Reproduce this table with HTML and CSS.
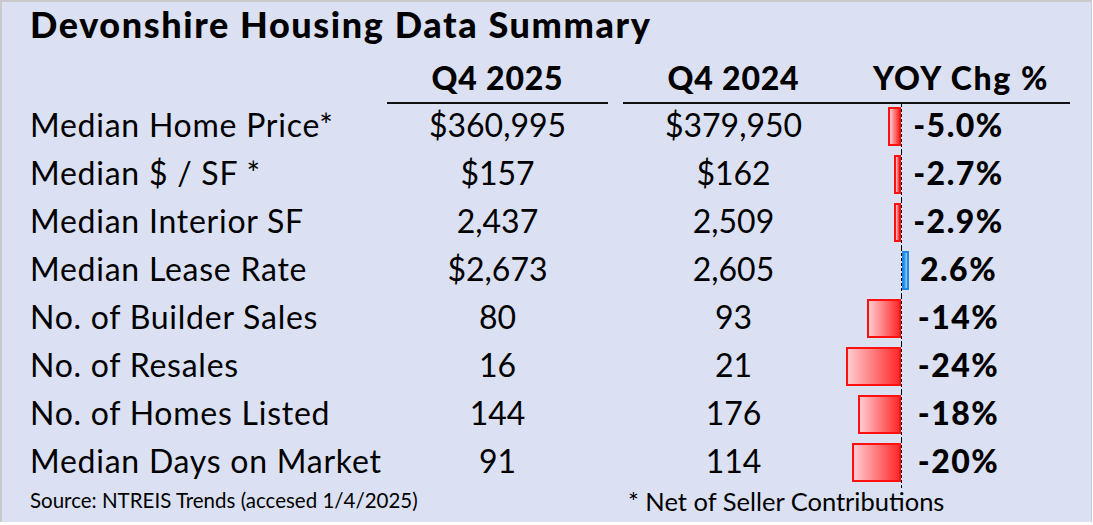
FILE: index.html
```html
<!DOCTYPE html>
<html>
<head>
<meta charset="utf-8">
<link rel="stylesheet" href="styles.css">
</head>
<body>
<div class="panel">
  <h1 class="title">Devonshire Housing Data Summary</h1>
  <div class="table">
    <div class="row head">
      <div class="label"></div>
      <div class="c25 hcell">Q4 2025</div>
      <div class="c24 hcell">Q4 2024</div>
      <div class="yoy-head hcell">YOY Chg %</div>
    </div>
    <div class="row">
      <div class="label">Median Home Price*</div>
      <div class="c25">$360,995</div>
      <div class="c24">$379,950</div>
      <div class="yoy"><div class="bars"><span class="bar neg" style="width:13px"></span></div><div class="pct"><span class="num">-5.0%</span></div></div>
    </div>
    <div class="row">
      <div class="label">Median $ / SF *</div>
      <div class="c25">$157</div>
      <div class="c24">$162</div>
      <div class="yoy"><div class="bars"><span class="bar neg" style="width:7px"></span></div><div class="pct"><span class="num">-2.7%</span></div></div>
    </div>
    <div class="row">
      <div class="label">Median Interior SF</div>
      <div class="c25">2,437</div>
      <div class="c24">2,509</div>
      <div class="yoy"><div class="bars"><span class="bar neg" style="width:7px"></span></div><div class="pct"><span class="num">-2.9%</span></div></div>
    </div>
    <div class="row">
      <div class="label">Median Lease Rate</div>
      <div class="c25">$2,673</div>
      <div class="c24">2,605</div>
      <div class="yoy"><div class="bars"></div><div class="pct"><span class="bar pos" style="width:7px"></span><span class="num">2.6%</span></div></div>
    </div>
    <div class="row">
      <div class="label">No. of Builder Sales</div>
      <div class="c25">80</div>
      <div class="c24">93</div>
      <div class="yoy"><div class="bars"><span class="bar neg" style="width:34px"></span></div><div class="pct"><span class="num">-14%</span></div></div>
    </div>
    <div class="row">
      <div class="label">No. of Resales</div>
      <div class="c25">16</div>
      <div class="c24">21</div>
      <div class="yoy"><div class="bars"><span class="bar neg" style="width:55px"></span></div><div class="pct"><span class="num">-24%</span></div></div>
    </div>
    <div class="row">
      <div class="label">No. of Homes Listed</div>
      <div class="c25">144</div>
      <div class="c24">176</div>
      <div class="yoy"><div class="bars"><span class="bar neg" style="width:43px"></span></div><div class="pct"><span class="num">-18%</span></div></div>
    </div>
    <div class="row">
      <div class="label">Median Days on Market</div>
      <div class="c25">91</div>
      <div class="c24">114</div>
      <div class="yoy"><div class="bars"><span class="bar neg" style="width:49px"></span></div><div class="pct"><span class="num">-20%</span></div></div>
    </div>
    <div class="row foot">
      <div class="source">Source: NTREIS Trends (accesed 1/4/2025)</div>
      <div class="note">* Net of Seller Contributions</div>
    </div>
  </div>
</div>
</body>
</html>
```
FILE: styles.css
```css
html, body {
  margin: 0;
  padding: 0;
  background: #ffffff;
}
.panel {
  width: 1092px;
  height: 522px;
  box-sizing: border-box;
  background: #dbe1f2;
  border-top: 2px solid #c9c9c9;
  border-left: 2px solid #c9c9c9;
  border-right: 1px solid #c9cde0;
  padding-left: 28px;
  overflow: hidden;
  font-family: "Lato", "Open Sans", sans-serif;
  color: #000;
}
.title {
  margin: 0;
  padding-top: 2px;
  font-size: 36px;
  line-height: 40px;
  font-weight: 900;
  letter-spacing: 1.6px;
}
.row {
  display: grid;
  grid-template-columns: 357px 236px 221px 226px;
  height: 48px;
}
.row > div {
  display: flex;
  align-items: center;
  font-size: 32px;
  line-height: 42px;
  padding-bottom: 6px;
}
.label {
  letter-spacing: 0.75px;
  white-space: nowrap;
}
.c25, .c24 {
  justify-content: center;
}
.c25 {
  margin-right: 15px;
}
.row.head {
  height: auto;
  padding-top: 16px;
}
.row.head > div {
  font-size: 32px;
  font-weight: 900;
  line-height: 36px;
  padding-bottom: 6px;
  letter-spacing: 0.8px;
}
.hcell {
  border-bottom: 2px solid #111;
}
.row.head .yoy-head {
  justify-content: center;
  padding-left: 8px;
  white-space: nowrap;
  letter-spacing: 1.6px;
}
.row > .yoy {
  display: grid;
  grid-template-columns: 57px 114px;
  align-items: stretch;
  padding-bottom: 0;
}
.bars {
  display: flex;
  justify-content: flex-end;
  align-items: flex-start;
  padding-top: 3px;
}
.pct {
  display: grid;
  border-left: 1px dashed #000;
}
.pct > * {
  grid-area: 1 / 1;
}
.num {
  justify-self: center;
  align-self: start;
  font-weight: 900;
  font-size: 32px;
  line-height: 42px;
  letter-spacing: 1.5px;
  white-space: nowrap;
}
.bar {
  display: block;
  height: 39px;
  box-sizing: border-box;
}
.bar.neg {
  border: 2px solid #ff1010;
  background: linear-gradient(to right, #ffcbd0, #ff2a2a);
}
.bar.pos {
  justify-self: start;
  align-self: start;
  margin-top: 3px;
  border: 2px solid #1e88e5;
  background: linear-gradient(to right, #1e88e5, #a9d3ff);
}
.row.foot {
  height: 34px;
}
.row.foot > div {
  white-space: nowrap;
  align-items: flex-start;
}
.row.foot > .source {
  grid-column: 1 / 3;
  font-size: 20.5px;
  line-height: 24px;
  padding-bottom: 10px;
}
.row.foot > .note {
  grid-column: 3 / 5;
  padding-left: 5px;
  font-size: 25.5px;
  line-height: 26px;
  padding-bottom: 8px;
}
```
